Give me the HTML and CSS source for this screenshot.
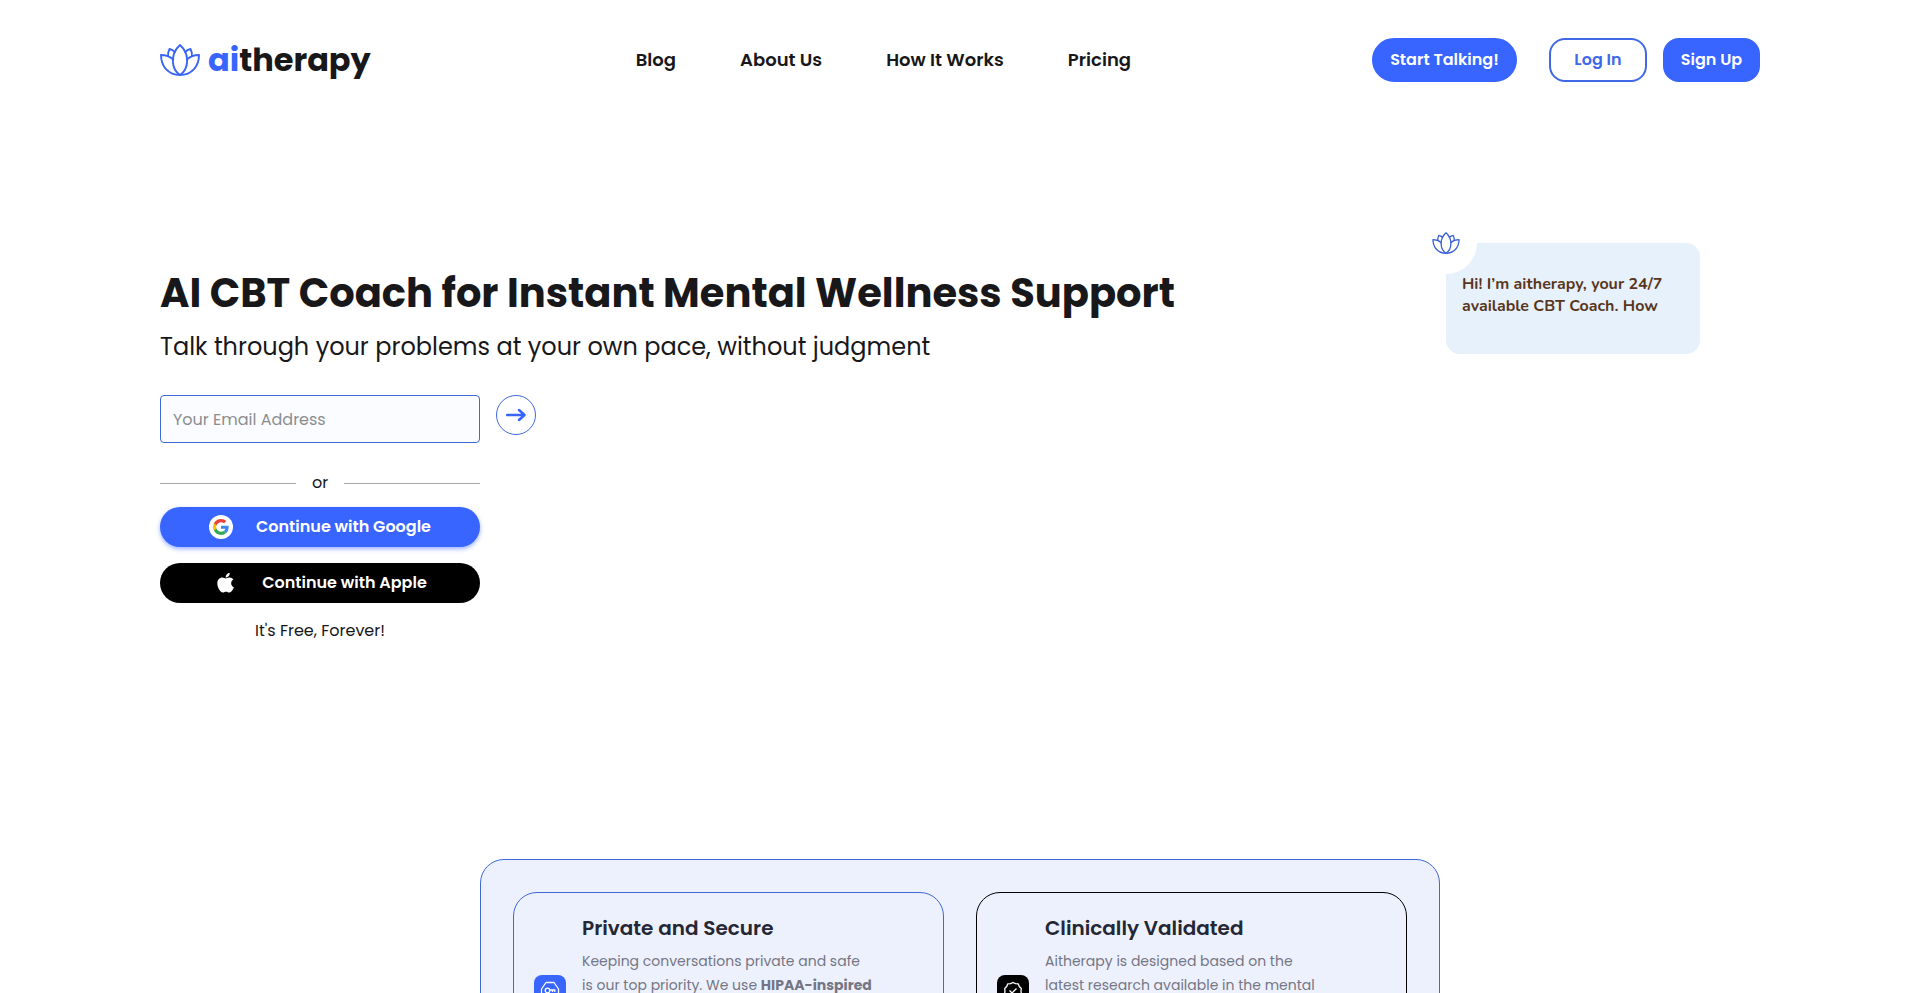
FILE: index.html
```html
<!DOCTYPE html>
<html lang="en">
<head>
<meta charset="utf-8">
<meta name="viewport" content="width=device-width, initial-scale=1">
<title>aitherapy</title>
<link rel="stylesheet" href="styles.css">
</head>
<body>
<svg class="defs" aria-hidden="true">
  <symbol id="lotus" viewBox="0 0 40 32">
    <g fill="none" stroke="currentColor" stroke-width="1.900" stroke-linejoin="round" stroke-linecap="round">
      <path d="M20 31C11 25 10 10 20 1c10 9 9 24 0 30Z"/>
      <path d="M13.300 15.500C10 12.500 6 11 1 11c0 11 7 20 19 20 12 0 19-9 19-20-5 0-9 1.500-12.300 4.500"/>
      <path d="M8 12c0-3 .5-5 1.500-7 2 .5 4 1.500 5.500 3"/>
      <path d="M32 12c0-3-.5-5-1.500-7-2 .5-4 1.500-5.500 3"/>
    </g>
  </symbol>
</svg>

<header class="header">
  <a class="logo" href="#"><svg class="logo-icon" aria-hidden="true"><use href="#lotus"/></svg><span><span class="logo-accent">ai</span>therapy</span></a>
  <nav class="nav">
    <a href="#">Blog</a>
    <a href="#">About Us</a>
    <a href="#">How It Works</a>
    <a href="#">Pricing</a>
  </nav>
  <div class="actions">
    <button class="btn btn-talk" type="button">Start Talking!</button>
    <button class="btn btn-login" type="button">Log In</button>
    <button class="btn btn-signup" type="button">Sign Up</button>
  </div>
</header>

<main>
  <section class="hero">
    <div class="intro">
      <h1>AI CBT Coach for Instant Mental Wellness Support</h1>
      <p class="lead">Talk through your problems at your own pace, without judgment</p>
      <form class="email-form">
        <input class="email" type="email" placeholder="Your Email Address" aria-label="Your Email Address">
        <button class="submit" type="button" aria-label="Continue">
          <svg viewBox="0 0 20 14" width="20" height="14" fill="none" stroke="currentColor" stroke-width="2.500" stroke-linecap="round" stroke-linejoin="round"><path d="M1 7h17M13 2l5.500 5L13 12"/></svg>
        </button>
      </form>
      <div class="signin">
        <div class="divider">or</div>
        <button class="social social-google" type="button">
          <span class="google-badge"><svg viewBox="0 0 48 48" width="16" height="16" aria-hidden="true">
            <path fill="#ea4335" d="M24 9.500c3.540 0 6.710 1.220 9.210 3.600l6.850-6.850C35.900 2.380 30.470 0 24 0 14.620 0 6.510 5.380 2.560 13.220l7.980 6.190C12.430 13.720 17.740 9.500 24 9.500z"/>
            <path fill="#4285f4" d="M46.980 24.550c0-1.570-.15-3.090-.38-4.550H24v9.020h12.940c-.58 2.960-2.260 5.480-4.780 7.180l7.730 6c4.510-4.180 7.090-10.360 7.090-17.650z"/>
            <path fill="#fbbc05" d="M10.530 28.590c-.48-1.450-.76-2.990-.76-4.590s.27-3.140.76-4.590l-7.980-6.190C.92 16.460 0 20.120 0 24c0 3.880.92 7.540 2.560 10.780l7.970-6.190z"/>
            <path fill="#34a853" d="M24 48c6.480 0 11.930-2.130 15.890-5.810l-7.730-6c-2.150 1.450-4.920 2.300-8.160 2.300-6.260 0-11.570-4.220-13.470-9.910l-7.980 6.190C6.510 42.620 14.620 48 24 48z"/>
          </svg></span>
          Continue with Google
        </button>
        <button class="social social-apple" type="button">
          <svg viewBox="28 28 328 400" width="17" height="20" fill="currentColor" aria-hidden="true"><path d="M318.700 236.700c-.2-36.700 16.400-64.400 50-84.800-18.800-26.900-47.200-41.700-84.700-44.600-35.500-2.800-74.300 20.700-88.500 20.700-15 0-49.400-19.700-76.400-19.700C63.300 109.200 4 152.800 4 241.500q0 39.300 14.400 81.200c12.800 36.700 59 126.700 107.200 125.200 25.200-.6 43-17.900 75.800-17.900 31.800 0 48.300 17.900 76.400 17.900 48.600-.7 90.400-82.500 102.600-119.300-65.200-30.700-61.700-90-61.700-91.900zm-56.600-164.200c27.300-32.400 24.800-61.900 24-72.500-24.100 1.400-52 16.400-67.900 34.900-17.500 19.800-27.800 44.300-25.600 71.900 26.100 2 49.900-11.400 69.500-34.300z" transform="translate(25 25) scale(.88)"/></svg>
          Continue with Apple
        </button>
        <p class="free">It's Free, Forever!</p>
      </div>
    </div>
    <aside class="chat">
      <span class="chat-badge"><svg aria-hidden="true"><use href="#lotus"/></svg></span>
      <p>Hi! I’m aitherapy, your 24/7 available CBT Coach. How</p>
    </aside>
  </section>

  <section class="panel">
    <article class="card">
      <span class="card-icon"><svg viewBox="0 0 20 20" width="20" height="20" fill="none" stroke="currentColor" stroke-width="1.300"><path d="M6 1.500h8L18.500 8v5L14 18.500H6L1.500 13V8Z" stroke-linejoin="round"/><circle cx="7.500" cy="9.500" r="2.300"/><path d="M9.800 9h5v2M12.500 9v2"/></svg></span>
      <div>
        <h2>Private and Secure</h2>
        <p>Keeping conversations private and safe<br>is our top priority. We use <b>HIPAA-inspired</b></p>
      </div>
    </article>
    <article class="card card-dark">
      <span class="card-icon"><svg viewBox="0 0 20 20" width="20" height="20" fill="none" stroke="currentColor" stroke-width="1.300" stroke-linejoin="round"><path d="m10 1.500 2.500 1.200 2.800.2 1 2.600 2 2L18 10l.3 2.500-2 2-1 2.600-2.800.2-2.500 1.200-2.500-1.200-2.800-.2-1-2.600-2-2L2 10l-.3-2.500 2-2 1-2.600 2.800-.2Z"/><path d="m6.500 9.500 2.500 2.500L13.500 7.500"/></svg></span>
      <div>
        <h2>Clinically Validated</h2>
        <p>Aitherapy is designed based on the<br>latest research available in the mental</p>
      </div>
    </article>
  </section>
</main>
</body>
</html>
```
FILE: styles.css
```css
* { box-sizing: border-box; }

body {
  height: 100vh;
  margin: 0;
  overflow: hidden;
  background: #fff;
  color: #18181a;
  font: 16px/24px Poppins, Inter, "Open Sans", sans-serif;
}

h1, h2, p { margin: 0; }
a { color: inherit; text-decoration: none; }
button { font: inherit; cursor: pointer; }
.defs { position: absolute; width: 0; height: 0; }

.header {
  display: flex;
  justify-content: space-between;
  align-items: center;
  max-width: 1600px;
  height: 120px;
  margin: 0 auto;
}

.logo {
  display: flex;
  align-items: center;
  gap: 8px;
  padding-right: 24px;
  font-size: 32px;
  font-weight: 700;
  line-height: 40px;
}
.logo-icon { width: 40px; height: 32px; color: #3a66f5; }
.logo-accent { color: #3864ff; }

.nav { display: flex; gap: 64px; font-size: 18px; font-weight: 600; }

.actions { display: flex; }
.btn {
  height: 44px;
  padding: 0;
  border: 2px solid #3864ff;
  border-radius: 16px;
  background: #3864ff;
  color: #fff;
  font-weight: 600;
}
.btn-talk { width: 145px; border-radius: 22px; }
.btn-login { width: 98px; margin: 0 16px 0 32px; border-color: #3f68e6; background: #fff; color: #3f68e6; }
.btn-signup { width: 97px; }

.hero {
  display: flex;
  justify-content: space-between;
  align-items: flex-start;
  max-width: 1600px;
  margin: 0 auto;
  padding: 123px 60px 216px 0;
}
.intro { padding-top: 20px; }

h1 { font-size: 40px; font-weight: 700; line-height: 60px; }
.lead { font-size: 24px; line-height: 40px; margin-top: 4px; }

.email-form { display: flex; gap: 16px; margin-top: 28px; }
.email {
  width: 320px;
  height: 48px;
  padding: 0 12px;
  border: 1px solid #3f68d8;
  border-radius: 4px;
  background: #fafcff;
  font: inherit;
}
.email::placeholder { color: #8c8c90; }
.submit {
  display: grid;
  place-items: center;
  width: 40px;
  height: 40px;
  padding: 0;
  border: 1px solid #4169e1;
  border-radius: 50%;
  background: #fff;
  color: #3864ff;
}

.signin { display: flex; flex-direction: column; gap: 16px; width: 320px; margin-top: 28px; }
.divider { display: flex; align-items: center; gap: 16px; margin-bottom: -4px; }
.divider::before, .divider::after { content: ""; flex: 1; height: 1px; background: #a8a8ac; }
.social {
  display: flex;
  align-items: center;
  justify-content: center;
  gap: 23px;
  height: 40px;
  border: 0;
  border-radius: 20px;
  color: #fff;
  font-weight: 600;
}
.social-google { background: #3864ff; box-shadow: 0 2px 4px #3864ff80; }
.social-apple { gap: 28px; padding-left: 10px; background: #000; }
.google-badge { display: grid; place-items: center; width: 24px; height: 24px; border-radius: 50%; background: #fff; }
.free { text-align: center; }

.chat {
  position: relative;
  width: 254px;
  min-height: 111px;
  padding: 30px 16px;
  border-radius: 14px;
  background: #e7f1fc;
  color: #59361b;
  font: 700 16px/22px Nunito, Lato, sans-serif;
}
.chat-badge {
  position: absolute;
  top: -31px;
  left: -31px;
  display: grid;
  place-items: center;
  width: 62px;
  height: 62px;
  border-radius: 50%;
  background: #fff;
  color: #3a5fd9;
}
.chat-badge svg { width: 28px; height: 22px; }

.panel {
  display: grid;
  grid-template-columns: 1fr 1fr;
  gap: 32px;
  max-width: 960px;
  margin: 0 auto;
  padding: 32px;
  border: 1px solid #3f68d8;
  border-radius: 24px;
  background: #edf1fe;
}
.card {
  display: flex;
  gap: 16px;
  min-height: 198px;
  padding: 20px;
  border: 1px solid #3f68d8;
  border-radius: 24px;
}
.card-dark { border-color: #000; }
.card-icon {
  display: grid;
  place-items: center;
  align-self: center;
  width: 32px;
  height: 32px;
  border-radius: 8px;
  background: #3864ff;
  color: #fff;
}
.card-dark .card-icon { background: #000; }
.card h2 { color: #252734; font-size: 20px; font-weight: 600; line-height: 30px; }
.card p { margin-top: 6px; color: #747684; font-size: 14px; white-space: nowrap; }
```
